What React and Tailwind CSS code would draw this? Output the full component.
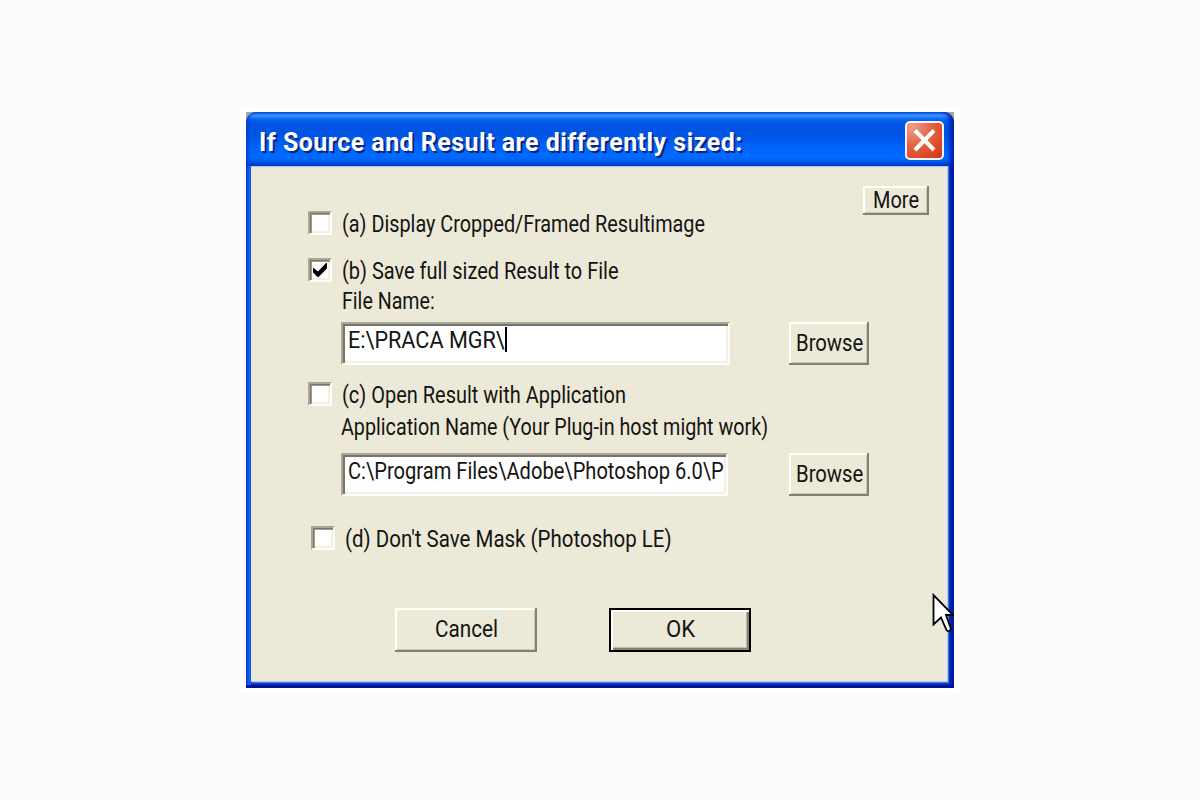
import React, { useState, useLayoutEffect, useRef } from 'react';
import clsx from 'clsx';

//Squeezes or stretches one line of text so it fills the given width
const FitText = ({ width, children, className }) => {
  const ref = useRef(null);
  const [scale, setScale] = useState(1);

  useLayoutEffect(() => {
    setScale(width / ref.current.offsetWidth);
  }, [width, children]);

  return (
    <span className="block h-6 shrink-0" style={{ width }}>
      <span
        ref={ref}
        className={clsx('inline-block origin-left whitespace-pre', className || 'text-[23px] leading-7')}
        style={{ transform: `scaleX(${scale})` }}
      >
        {children}
      </span>
    </span>
  );
};

const Checkbox = ({ checked, onChange, label, width }) => (
  <label className="flex h-6 items-center gap-2.5">
    <input type="checkbox" checked={checked} onChange={onChange} className="sr-only" />
    <span className="flex size-6 shrink-0 items-center justify-center border-2 border-t-[#aaa797] border-l-[#aaa797] border-r-[#fdfdfa] border-b-[#fdfdfa] bg-white shadow-[inset_1px_1px_0_#77746a,inset_2px_2px_0_#a09d92,inset_-2px_-2px_0_#f3f1e6]">
      {checked && (
        <svg viewBox="0 0 20 20" className="size-5">
          <path d="M3 7.5 L8 11.5 L16 3 H17 V8.5 L8.5 17 H7.5 L3 12.5 Z" fill="#000" />
        </svg>
      )}
    </span>
    <FitText width={width}>{label}</FitText>
  </label>
);

const Button = ({ children, className, width, isDefault }) => (
  <button
    className={clsx(
      'flex shrink-0 items-center justify-center',
      isDefault
        ? 'border-2 border-black shadow-[inset_2px_2px_0_#fffffb,inset_-2px_-2px_0_#85816f,inset_-3px_-3px_0_#c2beae]'
        : 'shadow-[inset_-2px_-2px_0_#858172,inset_2px_2px_0_#fffffa,inset_-3px_-3px_0_#c9c5b5]',
      className
    )}
  >
    <FitText width={width} className="text-[23px] leading-6">{children}</FitText>
  </button>
);

const TextField = ({ children, className }) => (
  <div
    className={clsx(
      'flex h-[43px] overflow-hidden border-2 border-t-[#aaa797] border-l-[#aaa797] border-r-[#fdfdfa] border-b-[#fdfdfa] bg-white pt-[3px] pl-[5px] shadow-[inset_2px_2px_0_#77746a,inset_-2px_-2px_0_#f3f1e6]',
      className
    )}
  >
    {children}
  </div>
);

const App = () => {
  const [options, setOptions] = useState({ a: false, b: true, c: false, d: false });

  const toggle = (key) => () => setOptions((prev) => ({ ...prev, [key]: !prev[key] }));

  return (
    <div className="flex h-screen w-screen items-center justify-center overflow-hidden bg-[#fbfbf9] font-['Roboto','Liberation_Sans',sans-serif] text-[#141412]">
      <div className="bg-white p-1.5">
        <div className="relative flex h-[576px] w-[708px] flex-col overflow-hidden bg-[#a8a8a4]">
          {/* Title bar */}
          <div className="flex h-[54px] shrink-0 items-center justify-between rounded-t-[10px] bg-[linear-gradient(180deg,#0453d5_0px,#0a5fe8_1px,#3c93ff_3px,#2a83fb_5px,#0866f2_7px,#0057e4_11px,#0053e0_19px,#0058ec_28px,#0064fc_36px,#006aff_45px,#0062f8_48px,#004be0_51px,#003cc8_54px)] pr-[10px] pl-[13px] shadow-[inset_5px_0_4px_-3px_#003fc8,inset_-6px_0_4px_-2px_#0020a8]">
            <FitText
              width={484}
              className="text-[26px] leading-[31px] font-bold tracking-[0.5px] text-white [text-shadow:2px_2px_0_#0a2480]"
            >
              If Source and Result are differently sized:
            </FitText>
            <button
              aria-label="Close"
              className="mt-[3px] flex size-[39px] items-center justify-center rounded-[5px] border-2 border-[#f6f3fa] bg-[radial-gradient(circle_at_15%_10%,#eea08c_0%,#e2694b_40%,#dc4a22_75%,#c93a0c_100%)]"
            >
              <svg viewBox="0 0 35 35" className="size-[35px]">
                <path d="M8 7.5 L27 27 M27 7.5 L8 27" stroke="#fff" strokeWidth="4" fill="none" />
              </svg>
            </button>
          </div>

          <div className="flex grow border-b-[3px] border-[#00128e] bg-[linear-gradient(90deg,#0038d0_0px,#0b55ea_2px,#1263f5_4px,#0a55e6_5px,#0030b8_703px,#001694_708px)]">
            <div className="mb-[3px] ml-[5px] flex w-[697px] flex-col border-r border-b border-t border-[#b6c4e4] bg-[#ece9d8] pt-[19px] pl-[57px] shadow-[1px_0_0_#3f7cf0,1px_1px_0_#3f7cf0,0_3px_0_#0639cf]">
              <div className="flex h-[49px] items-end justify-between pr-[18px]">
                <Checkbox checked={options.a} onChange={toggle('a')} label="(a) Display Cropped/Framed Resultimage" width={363} />
                <Button className="h-[29px] w-[66px] self-start" width={46}>More</Button>
              </div>

              <div className="mt-[23px]">
                <Checkbox checked={options.b} onChange={toggle('b')} label="(b) Save full sized Result to File" width={277} />
              </div>
              <div className="mt-1.5 ml-[34px]">
                <FitText width={93}>File Name:</FitText>
              </div>
              <div className="mt-2.5 ml-[33px] flex justify-between pr-[78px]">
                <TextField className="w-[389px]">
                  <FitText width={157}>E:\PRACA MGR\</FitText>
                  <span className="h-[25px] w-0.5 bg-black" />
                </TextField>
                <Button className="h-[43px] w-[80px]" width={67}>Browse</Button>
              </div>

              <div className="mt-[17px]">
                <Checkbox checked={options.c} onChange={toggle('c')} label="(c) Open Result with Application" width={284} />
              </div>
              <div className="mt-2 ml-[33px]">
                <FitText width={427}>Application Name (Your Plug-in host might work)</FitText>
              </div>
              <div className="mt-[15px] ml-[33px] flex justify-between pr-[78px]">
                <TextField className="w-[387px]">
                  <FitText width={376}>C:\Program Files\Adobe\Photoshop 6.0\P</FitText>
                </TextField>
                <Button className="h-[43px] w-[80px]" width={67}>Browse</Button>
              </div>

              <div className="mt-[30px] ml-[3px]">
                <Checkbox checked={options.d} onChange={toggle('d')} label="(d) Don't Save Mask (Photoshop LE)" width={327} />
              </div>

              <div className="mt-[58px] ml-[87px] flex gap-[72px]">
                <Button className="h-11 w-[142px]" width={63}>Cancel</Button>
                <Button className="h-11 w-[142px]" width={29} isDefault>OK</Button>
              </div>
            </div>
          </div>

          {/* Mouse pointer, cut off by the window edge */}
          <svg viewBox="0 0 24 42" className="absolute top-[481px] left-[686px] h-[42px] w-6">
            <path
              d="M1.5 2 V31.5 L9 24.5 L14.5 37 Q17 40 19 36 L14 22 H21 Z"
              fill="#fff"
              stroke="#000"
              strokeWidth="1.8"
            />
          </svg>
        </div>
      </div>
    </div>
  );
};

export default App;
